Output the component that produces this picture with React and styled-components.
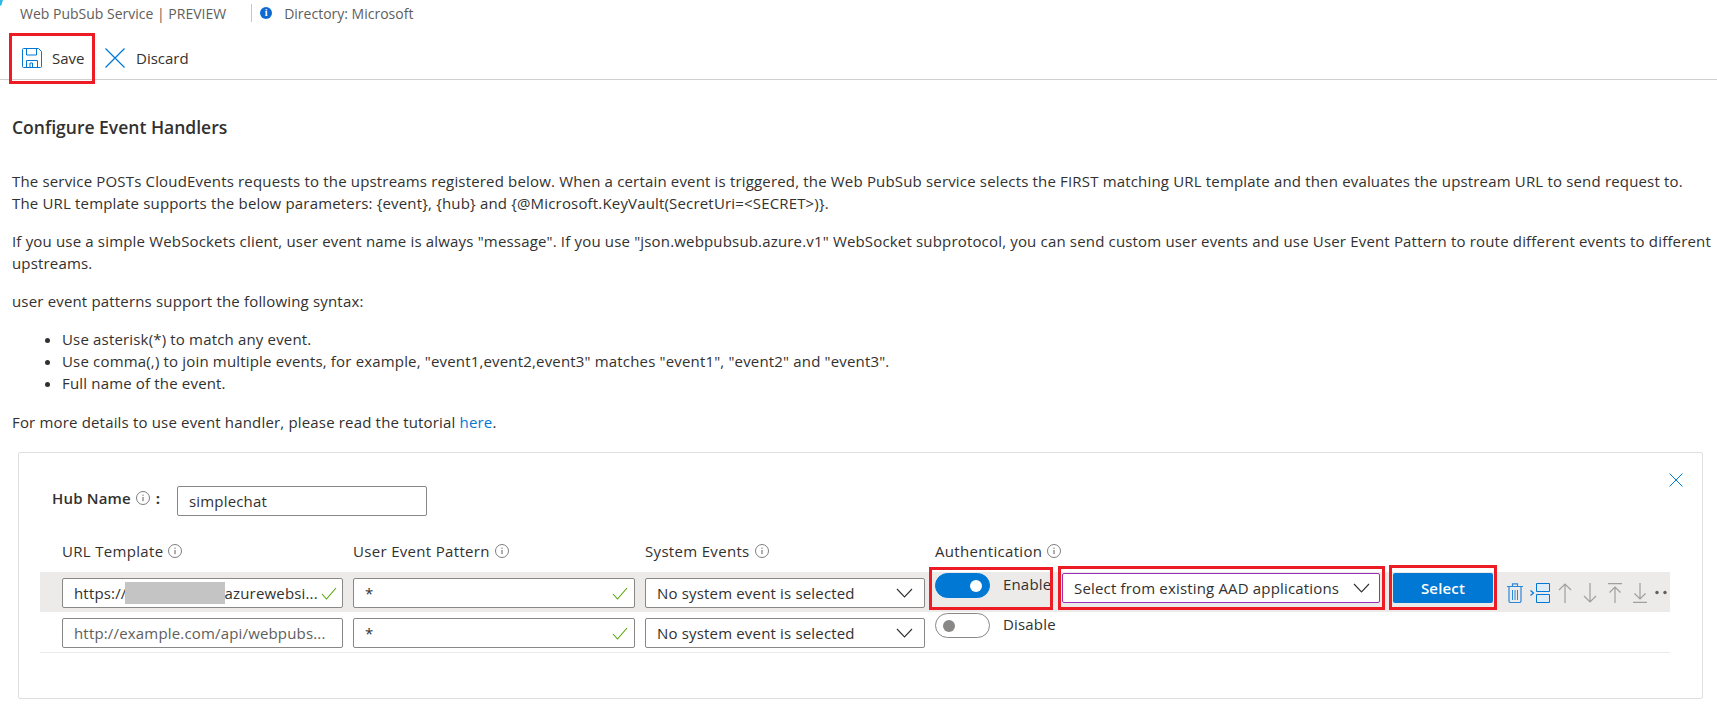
import React from 'react';
import styled, { createGlobalStyle } from 'styled-components';

const GlobalStyle = createGlobalStyle`
  * {
    box-sizing: border-box;
  }
  html, body {
    margin: 0;
    background: #fff;
    color: #323130;
    font-family: "Open Sans", "Noto Sans", Arial, sans-serif;
    font-size: 15px;
    letter-spacing: 0.17px;
    overflow: hidden;
  }
`;

const InfoDot = () => (
  <svg width="14" height="14" viewBox="0 0 14 14">
    <circle cx="7" cy="7" r="6.5" fill="none" stroke="#605e5c" strokeWidth="0.8" />
    <path d="M7 6v4.2M7 3.6v1.2" stroke="#605e5c" strokeWidth="1" />
  </svg>
);

const Check = () => (
  <svg width="16" height="13" viewBox="0 0 16 13">
    <path d="M1 7l4.5 5L15 1" fill="none" stroke="#57a300" strokeWidth="1.1" />
  </svg>
);

const Chevron = () => (
  <svg width="17" height="10" viewBox="0 0 17 10">
    <path d="M1 1l7.5 8L16 1" fill="none" stroke="#323130" strokeWidth="1.1" />
  </svg>
);

const Header = styled.div`
  height: 26px;
  display: flex;
  align-items: center;
  color: #605e5c;
  font-size: 14px;
  letter-spacing: 0;
`;

const LogoBit = styled.svg`
  align-self: flex-start;
  margin-right: 17px;
`;

const HeaderRule = styled.span`
  width: 1px;
  height: 18px;
  margin: 0 8px 0 25px;
  background: #c8c6c4;
`;

const InfoBadge = styled.span`
  width: 12px;
  height: 12px;
  margin-right: 12px;
  border-radius: 50%;
  background: #0b6bd3;
  color: #fff;
  font: bold 10px/12px "Liberation Serif", serif;
  text-align: center;
`;

const Toolbar = styled.div`
  height: 54px;
  padding: 10px 0 0 12px;
  display: flex;
  align-items: flex-start;
  border-bottom: 1px solid #d2d0ce;
  letter-spacing: 0;
`;

const Marked = styled.div`
  outline: 3px solid #ed1c24;
  display: flex;
`;

const ToolButton = styled.div`
  height: 43px;
  display: flex;
  align-items: center;
  gap: ${(p) => p.$gap}px;
`;

const SaveMark = styled(Marked)`
  width: 80px;
  height: 45px;
  padding-left: 10px;
`;

const DiscardButton = styled(ToolButton)`
  margin-left: 13px;
`;

const Content = styled.div`
  padding: 36px 0 0 12px;
  white-space: nowrap;
  line-height: 22px;
`;

const Title = styled.h2`
  margin: 0 0 32px;
  font-size: 17.5px;
  font-weight: 600;
  line-height: 22px;
  letter-spacing: 0;
`;

const Para = styled.p`
  margin: 0 0 16px;
`;

const Bullets = styled.ul`
  margin: 0 0 17px;
  padding-left: 50px;
`;

const Link = styled.a`
  color: #0078d4;
`;

const Card = styled.div`
  width: 1685px;
  height: 247px;
  margin: 19px 0 0 6px;
  padding: 20px 32px 0 21px;
  border: 1px solid #e1dfdd;
  border-radius: 2px;
`;

const CardTop = styled.div`
  display: flex;
  justify-content: space-between;
`;

const CloseIcon = styled.svg`
  margin-right: -13px;
`;

const HubRow = styled.div`
  margin: 13px 0 0 12px;
  display: flex;
  align-items: center;
  height: 30px;
`;

const HubLabel = styled.span`
  display: flex;
  align-items: center;
  gap: 5px;
  width: 125px;
  margin-top: -6px;
  font-weight: 600;
`;

const Colon = styled.span`
  margin-left: 1px;
  font-weight: 700;
`;

const Field = styled.div`
  width: ${(p) => p.$width || 'auto'};
  height: 30px;
  padding: 0 ${(p) => p.$right || 10}px 0 11px;
  display: flex;
  align-items: center;
  justify-content: space-between;
  background: #fff;
  border: 1px solid ${(p) => p.$border || '#8a8886'};
  border-radius: 2px;
  color: ${(p) => p.$muted ? '#605e5c' : '#323130'};
  overflow: hidden;
`;

const Grid = styled.div`
  display: grid;
  grid-template-columns: 281px 282px 280px 1fr;
  column-gap: 10px;
  padding-left: 22px;
`;

const HeadRow = styled(Grid)`
  margin-top: 20px;
  height: 36px;
  align-items: center;
  padding-bottom: 6px;
`;

const HeadCell = styled.div`
  display: flex;
  align-items: center;
  gap: 5px;
  font-weight: 500;
  letter-spacing: 0.32px;
`;

const Row = styled(Grid)`
  height: 40px;
  padding-top: 1px;
  background: ${(p) => p.$active ? '#edebe9' : 'transparent'};
`;

const LastRow = styled(Row)`
  height: 41px;
  border-bottom: 1px solid #edebe9;
`;

const FieldCell = styled.div`
  margin-top: 5px;
`;

const UrlText = styled.span`
  display: flex;
  align-items: center;
`;

const Redacted = styled.span`
  width: 100px;
  height: 22px;
  margin-left: -2px;
  background: #c4c4c4;
`;

const AuthCell = styled.div`
  display: flex;
  align-items: flex-start;
`;

const EnableMark = styled(Marked)`
  width: 118px;
  height: 37px;
  margin: -3px 0 0 -3px;
  padding: 3px 0 0 3px;
`;

const Toggle = styled.span`
  flex: none;
  width: 55px;
  height: 25px;
  padding: 0 7px;
  display: flex;
  align-items: center;
  justify-content: ${(p) => p.$on ? 'flex-end' : 'flex-start'};
  background: ${(p) => p.$on ? '#0078d4' : '#fff'};
  border: 1px solid ${(p) => p.$on ? '#0078d4' : '#8a8886'};
  border-radius: 13px;
`;

const Knob = styled.span`
  width: 12px;
  height: 12px;
  border-radius: 50%;
  background: ${(p) => p.$on ? '#fff' : '#8a8886'};
`;

const ToggleLabel = styled.span`
  margin-left: 13px;
`;

const AppMark = styled(Marked)`
  width: 321px;
  height: 38px;
  margin: -4px 0 0 11px;
  padding: 4px 2px 0 1px;
`;

const SelectMark = styled(Marked)`
  width: 102px;
  height: 39px;
  margin: -5px 0 0 10px;
  padding: 5px 1px 0;
`;

const PrimaryButton = styled.div`
  width: 100px;
  height: 30px;
  background: #0078d4;
  border-radius: 2px;
  color: #fff;
  font-weight: 600;
  line-height: 30px;
  text-align: center;
`;

const Actions = styled.div`
  margin: 10px 0 0 13px;
  display: flex;
`;

const Slot = styled.span`
  display: block;
  width: ${(p) => p.$width}px;
  height: 20px;
`;

const Arrow = ({ d }) => (
  <svg width="14" height="20" viewBox="0 0 14 20">
    <path d={d} fill="none" stroke="#a19f9d" strokeWidth="1.2" />
  </svg>
);

export default function App() {
  return (
    <>
      <GlobalStyle />
      <Header>
        <LogoBit width="3" height="6" viewBox="0 0 3 6">
          <path d="M0 0h3L1.5 5 0 6z" fill="#32b8e6" />
        </LogoBit>
        <span>Web PubSub Service | PREVIEW</span>
        <HeaderRule />
        <InfoBadge>i</InfoBadge>
        <span>Directory: Microsoft</span>
      </Header>
      <Toolbar>
        <SaveMark>
          <ToolButton $gap={10}>
            <svg width="20" height="20" viewBox="0 0 20 20">
              <path d="M1.5.5h15l3 3v15a1 1 0 0 1-1 1h-17a1 1 0 0 1-1-1v-17a1 1 0 0 1 1-1z" fill="none" stroke="#0078d4" />
              <path d="M4.5 1v6h10V1M4.5 19.5v-7h11v7M8 19v-4h2.5v4" fill="none" stroke="#0078d4" />
            </svg>
            <span>Save</span>
          </ToolButton>
        </SaveMark>
        <DiscardButton $gap={11}>
          <svg width="20" height="20" viewBox="0 0 20 20">
            <path d="M.5.5l19 19M19.5.5l-19 19" stroke="#0078d4" strokeWidth="1.2" />
          </svg>
          <span>Discard</span>
        </DiscardButton>
      </Toolbar>
      <Content>
        <Title>Configure Event Handlers</Title>
        <Para>
          The service POSTs CloudEvents requests to the upstreams registered below. When a certain event is triggered, the Web PubSub service selects the FIRST matching URL template and then evaluates the upstream URL to send request to.<br />
          The URL template supports the below parameters: {'{event}'}, {'{hub}'} and {'{@Microsoft.KeyVault(SecretUri=<SECRET>)}'}.
        </Para>
        <Para>
          If you use a simple WebSockets client, user event name is always "message". If you use "json.webpubsub.azure.v1" WebSocket subprotocol, you can send custom user events and use User Event Pattern to route different events to different<br />
          upstreams.
        </Para>
        <Para>user event patterns support the following syntax:</Para>
        <Bullets>
          <li>Use asterisk(*) to match any event.</li>
          <li>Use comma(,) to join multiple events, for example, "event1,event2,event3" matches "event1", "event2" and "event3".</li>
          <li>Full name of the event.</li>
        </Bullets>
        <div>For more details to use event handler, please read the tutorial <Link>here</Link>.</div>
        <Card>
          <CardTop>
            <HubRow>
              <HubLabel>Hub Name <InfoDot /> <Colon>:</Colon></HubLabel>
              <Field $width="250px">simplechat</Field>
            </HubRow>
            <CloseIcon width="14" height="14" viewBox="0 0 14 14">
              <path d="M.5.5l13 13M13.5.5l-13 13" stroke="#0078d4" />
            </CloseIcon>
          </CardTop>
          <HeadRow>
            <HeadCell>URL Template <InfoDot /></HeadCell>
            <HeadCell>User Event Pattern <InfoDot /></HeadCell>
            <HeadCell>System Events <InfoDot /></HeadCell>
            <HeadCell>Authentication <InfoDot /></HeadCell>
          </HeadRow>
          <Row $active>
            <FieldCell>
              <Field $right={5}>
                <UrlText>https://<Redacted />azurewebsi...</UrlText>
                <Check />
              </Field>
            </FieldCell>
            <FieldCell>
              <Field $right={6}><span>*</span><Check /></Field>
            </FieldCell>
            <FieldCell>
              <Field $right={11}>No system event is selected<Chevron /></Field>
            </FieldCell>
            <AuthCell>
              <EnableMark>
                <Toggle $on><Knob $on /></Toggle>
                <ToggleLabel>Enable</ToggleLabel>
              </EnableMark>
              <AppMark>
                <Field $width="318px" $border="#9a30b8" $right={9}>Select from existing AAD applications<Chevron /></Field>
              </AppMark>
              <SelectMark>
                <PrimaryButton>Select</PrimaryButton>
              </SelectMark>
              <Actions>
                <Slot $width={23}>
                  <svg width="16" height="20" viewBox="0 0 16 20">
                    <path d="M0 3.5h16M5.5 3V.8h5V3M2 4v14a1.5 1.5 0 0 0 1.5 1.5h9A1.5 1.5 0 0 0 14 18V4" fill="none" stroke="#2b88d8" strokeWidth="1.2" />
                    <path d="M5.5 7v10M8 7v10M10.5 7v10" stroke="#2b88d8" />
                  </svg>
                </Slot>
                <Slot $width={28}>
                  <svg width="20" height="20" viewBox="0 0 20 20">
                    <path d="M.5 7.5l3 2.5-3 2.5" fill="none" stroke="#0078d4" strokeWidth="1.2" />
                    <path d="M6.5.5h13v8h-13zM6.5 11.5h13v8h-13z" fill="#deecf9" stroke="#0078d4" />
                  </svg>
                </Slot>
                <Slot $width={25}><Arrow d="M7 20V1M1 7l6-6 6 6" /></Slot>
                <Slot $width={25}><Arrow d="M7 0v19M1 13l6 6 6-6" /></Slot>
                <Slot $width={25}><Arrow d="M0 .6h14M7 20V4M1.5 9.5L7 4l5.5 5.5" /></Slot>
                <Slot $width={22}><Arrow d="M0 19.4h14M7 0v16M1.5 10.5L7 16l5.5-5.5" /></Slot>
                <Slot $width={12}>
                  <svg width="12" height="20" viewBox="0 0 12 20">
                    <circle cx="2" cy="9.5" r="1.7" fill="#605e5c" />
                    <circle cx="10" cy="9.5" r="1.7" fill="#605e5c" />
                  </svg>
                </Slot>
              </Actions>
            </AuthCell>
          </Row>
          <LastRow>
            <FieldCell>
              <Field $muted>http://example.com/api/webpubs...</Field>
            </FieldCell>
            <FieldCell>
              <Field $right={6}><span>*</span><Check /></Field>
            </FieldCell>
            <FieldCell>
              <Field $right={11}>No system event is selected<Chevron /></Field>
            </FieldCell>
            <AuthCell>
              <Toggle><Knob /></Toggle>
              <ToggleLabel>Disable</ToggleLabel>
            </AuthCell>
          </LastRow>
        </Card>
      </Content>
    </>
  );
}
